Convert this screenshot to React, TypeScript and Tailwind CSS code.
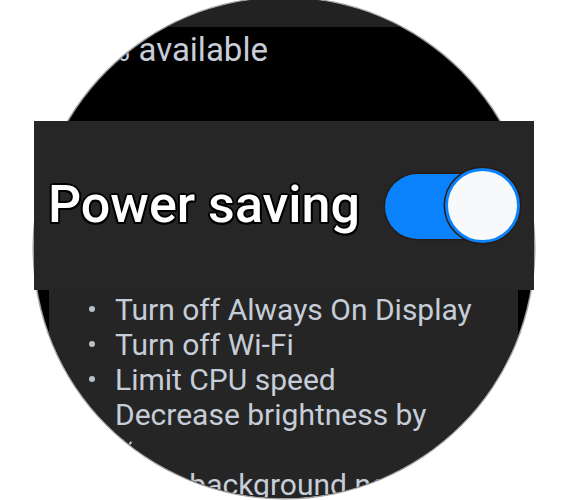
import React from "react";

const items: React.ReactNode[] = [
  "Turn off Always On Display",
  "Turn off Wi-Fi",
  "Limit CPU speed",
  <>
    Decrease brightness by
    <br />%
  </>,
  "Limit background network usage",
];

function Toggle() {
  return (
    <div className="relative w-[135px] h-[76px] shrink-0">
      <div className="absolute left-0 top-[6px] w-[128px] h-[65px] rounded-full bg-[#0a82fb] shadow-[0_0_0_1.5px_#2a1a12]" />
      <div className="absolute right-0 top-0 w-[75px] h-[75px] rounded-full bg-[#f8f9fa] border-[3px] border-[#0a82fb] shadow-[0_0_0_1.5px_#2a1a12]" />
    </div>
  );
}

export default function App() {
  return (
    <div className="relative w-[568px] h-[500px] bg-white overflow-hidden font-['Roboto',sans-serif]">
      <div className="absolute left-[34px] top-[-2px] w-[500px] h-[500px] rounded-full overflow-hidden bg-black shadow-[0_0_0_1.5px_#a0a0a0] flex flex-col">
        <div className="h-[29px] bg-[#222222] shrink-0" />
        <div className="mt-[5px] pl-[35px] text-[33px] leading-[36px] text-[#c6cdd8] whitespace-nowrap">
          15% available
        </div>
        <div className="mt-[217px] ml-[15px] mr-[16px] flex-1 bg-[#252525] pt-[7px]">
          <ul className="flex flex-col">
            {items.map((t, i) => (
              <li key={i} className="flex text-[30px] leading-[35px] text-[#c6cdd8] whitespace-nowrap">
                <span className="w-[66px] h-[33px] shrink-0 flex items-center pl-[40px]">
                  <span className="w-[6px] h-[6px] rounded-full bg-[#b9c0ca]" />
                </span>
                <span>{t}</span>
              </li>
            ))}
          </ul>
        </div>
      </div>
      <div className="absolute left-[34px] top-[121px] w-[500px] h-[169px] bg-[#262626] flex items-center justify-between pl-[14px] pr-[14px]">
        <span className="text-[52px] leading-none font-medium text-white whitespace-nowrap mt-[-2px] [text-shadow:2px_0_0_#000,-2px_0_0_#000,0_2px_0_#000,0_-2px_0_#000,1.5px_1.5px_0_#000,-1.5px_-1.5px_0_#000,1.5px_-1.5px_0_#000,-1.5px_1.5px_0_#000]">
          Power saving
        </span>
        <Toggle />
      </div>
    </div>
  );
}
